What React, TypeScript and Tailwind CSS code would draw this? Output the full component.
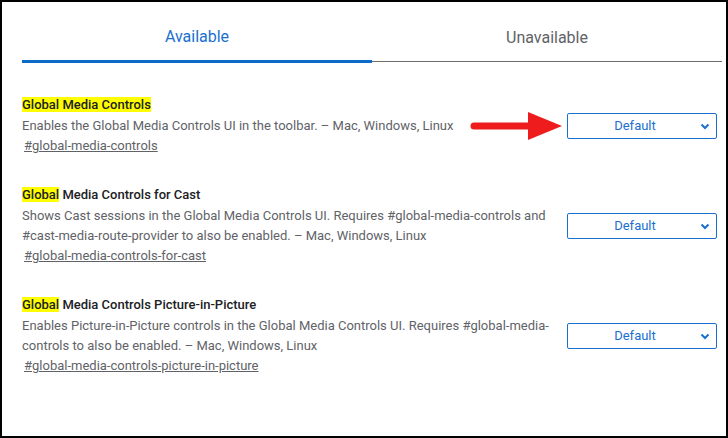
const items = [
  {
    hl: 'Global Media Controls',
    rest: '',
    desc: ['Enables the Global Media Controls UI in the toolbar. – Mac, Windows, Linux'],
    link: '#global-media-controls',
    arrow: true,
  },
  {
    hl: 'Global',
    rest: ' Media Controls for Cast',
    desc: [
      'Shows Cast sessions in the Global Media Controls UI. Requires #global-media-controls and',
      '#cast-media-route-provider to also be enabled. – Mac, Windows, Linux',
    ],
    link: '#global-media-controls-for-cast',
  },
  {
    hl: 'Global',
    rest: ' Media Controls Picture-in-Picture',
    desc: [
      'Enables Picture-in-Picture controls in the Global Media Controls UI. Requires #global-media-',
      'controls to also be enabled. – Mac, Windows, Linux',
    ],
    link: '#global-media-controls-picture-in-picture',
  },
];

function Arrow() {
  return (
    <svg className="absolute left-[-98px] top-1/2 -translate-y-1/2" width="94" height="30" viewBox="0 0 94 30">
      <line x1="4" y1="15" x2="62" y2="15" stroke="#ee1c1c" strokeWidth="7" strokeLinecap="round" />
      <polygon points="58,1 92,15 58,29" fill="#ee1c1c" />
    </svg>
  );
}

function Select({ arrow }: { arrow?: boolean }) {
  return (
    <div className="relative shrink-0 w-[150px] h-[26px] border border-[#1a6fcf] rounded-[2px] flex items-center justify-center text-[13px] text-[#1a6fcf]">
      {arrow && <Arrow />}
      <span className="pr-[14px]">Default</span>
      <svg className="absolute right-[6px] top-[9px]" width="10" height="7" viewBox="0 0 10 7">
        <polyline points="1.5,1.5 5,5 8.5,1.5" fill="none" stroke="#1a6fcf" strokeWidth="2" />
      </svg>
    </div>
  );
}

export default function App() {
  return (
    <div className="w-[728px] h-[438px] bg-white border-2 border-black pl-[20px] pr-[4px] font-['Roboto',sans-serif] overflow-hidden">
      <div className="flex h-[61px]">
        <div className="flex-1 flex items-center justify-center border-b-[3px] border-[#0b6bc7] text-[16px] text-[#1a6fcf] pt-[12px]">
          Available
        </div>
        <div className="flex-1 flex items-center justify-center border-b border-[#6b6b6b] text-[16px] text-[#5f6368] pt-[12px] mb-[1px]">
          Unavailable
        </div>
      </div>

      <div className="mt-[32px] flex flex-col gap-[29px] pr-[5px]">
        {items.map((it, i) => (
          <div key={i} className="flex items-center">
            <div className="flex-1 text-[13px] leading-[20px]">
              <div className="font-medium text-[#202124] mb-[1px]">
                <span className="bg-[#ffff00]">{it.hl}</span>
                {it.rest}
              </div>
              {it.desc.map((line, j) => (
                <div key={j} className="text-[#5f6368] whitespace-nowrap">{line}</div>
              ))}
              <div className="ml-[2px] text-[#5f6368] underline">{it.link}</div>
            </div>
            <Select arrow={it.arrow} />
          </div>
        ))}
      </div>
    </div>
  );
}
